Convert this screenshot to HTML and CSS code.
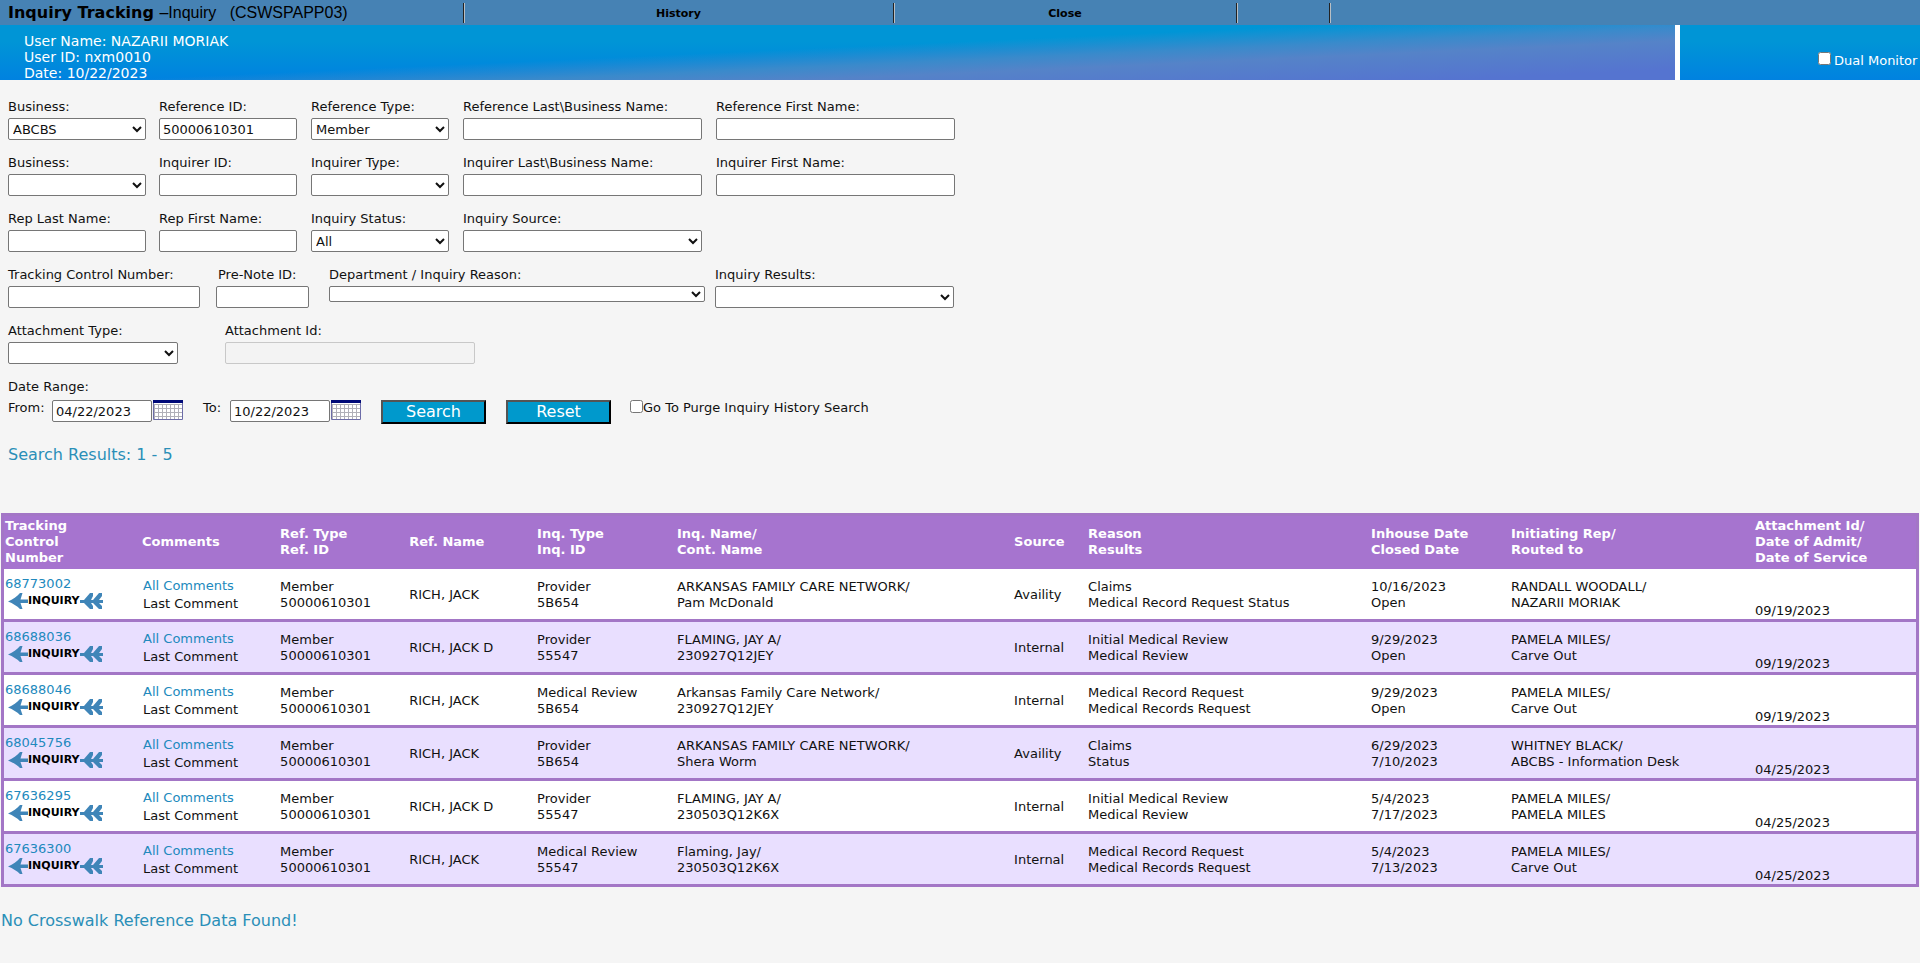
FILE: index.html
```html
<!DOCTYPE html>
<html lang="en">
<head>
<meta charset="utf-8">
<title>Inquiry Tracking</title>
<link rel="stylesheet" href="styles.css">
</head>
<body>
<svg class="defs" aria-hidden="true">
  <defs>
    <pattern id="grid" width="4" height="4" patternUnits="userSpaceOnUse" x="1" y="4">
      <path d="M0 .5H4M.5 0V4" stroke="#b0b0b8" stroke-width="1" fill="none"/>
    </pattern>
    <symbol id="calendar" viewBox="0 0 30 20">
      <path d="M0 0H30V20H0Z" fill="#fff"/>
      <path d="M1 4H29V19H1Z" fill="url(#grid)"/>
      <path d="M0 0H30V3H0Z" fill="#000a78"/>
      <path d="M.5 3V19.5H29.5V3" fill="none" stroke="#6c6ca8"/>
    </symbol>
    <symbol id="head" viewBox="0 0 20 16">
      <path d="M0 8.500C5 6.500 9 3.500 12 0H14.500L12.500 6.500H20V10H12.500L14.500 16H12C9 13 5 10.500 0 8.500Z" fill="#3f85b8"/>
    </symbol>
    <symbol id="fletch" viewBox="0 0 24 16">
      <path d="M0 7H4L10 0H13V3L11 7H13L19 0H22V3L19 7H23V10H19L22 13V16H19L13 10H11L13 13V16H10L4 10H0Z" fill="#3f85b8"/>
    </symbol>
  </defs>
</svg>

<header class="topbar">
  <h1 class="brand">Inquiry Tracking <span class="app">–Inquiry &nbsp; (CSWSPAPP03)</span></h1>
  <a class="menu" href="#history">History</a>
  <a class="menu" href="#close">Close</a>
  <span class="menu"></span>
  <span class="menu"></span>
</header>

<div class="banner">
  <div class="user">
    <div>User Name: NAZARII MORIAK</div>
    <div>User ID: nxm0010</div>
    <div>Date: 10/22/2023</div>
  </div>
  <div class="monitor">
    <input class="check" type="checkbox" id="dual"><label for="dual">Dual Monitor</label>
  </div>
</div>

<main>
<form class="search">
  <div class="row five">
    <div class="field"><label for="b1">Business:</label><select id="b1" class="ctl short"><option>ABCBS</option></select></div>
    <div class="field"><label for="refid">Reference ID:</label><input id="refid" class="ctl short" type="text" value="50000610301"></div>
    <div class="field"><label for="reft">Reference Type:</label><select id="reft" class="ctl short"><option>Member</option></select></div>
    <div class="field"><label for="refl">Reference Last\Business Name:</label><input id="refl" class="ctl long" type="text"></div>
    <div class="field"><label for="reff">Reference First Name:</label><input id="reff" class="ctl long" type="text"></div>
  </div>
  <div class="row five">
    <div class="field"><label for="b2">Business:</label><select id="b2" class="ctl short"><option></option></select></div>
    <div class="field"><label for="inqid">Inquirer ID:</label><input id="inqid" class="ctl short" type="text"></div>
    <div class="field"><label for="inqt">Inquirer Type:</label><select id="inqt" class="ctl short"><option></option></select></div>
    <div class="field"><label for="inql">Inquirer Last\Business Name:</label><input id="inql" class="ctl long" type="text"></div>
    <div class="field"><label for="inqf">Inquirer First Name:</label><input id="inqf" class="ctl long" type="text"></div>
  </div>
  <div class="row five">
    <div class="field"><label for="repl">Rep Last Name:</label><input id="repl" class="ctl short" type="text"></div>
    <div class="field"><label for="repf">Rep First Name:</label><input id="repf" class="ctl short" type="text"></div>
    <div class="field"><label for="stat">Inquiry Status:</label><select id="stat" class="ctl short"><option>All</option></select></div>
    <div class="field"><label for="src">Inquiry Source:</label><select id="src" class="ctl long"><option></option></select></div>
  </div>
  <div class="row four">
    <div class="field"><label for="tcn">Tracking Control Number:</label><input id="tcn" class="ctl tcn" type="text"></div>
    <div class="field"><label class="inset" for="pre">Pre-Note ID:</label><input id="pre" class="ctl pre" type="text"></div>
    <div class="field"><label for="dept">Department / Inquiry Reason:</label><select id="dept" class="ctl dept"><option></option></select></div>
    <div class="field"><label for="res">Inquiry Results:</label><select id="res" class="ctl long"><option></option></select></div>
  </div>
  <div class="row two">
    <div class="field"><label for="att">Attachment Type:</label><select id="att" class="ctl att"><option></option></select></div>
    <div class="field"><label for="attid">Attachment Id:</label><input id="attid" class="ctl attid" type="text" disabled></div>
  </div>
  <div class="dates-title">Date Range:</div>
  <div class="dates">
    <div class="date from"><label for="from">From:</label><input id="from" class="ctl day" type="text" value="04/22/2023"><button class="cal" type="button" aria-label="Pick from date"><svg><use href="#calendar"/></svg></button></div>
    <div class="date to"><label for="to">To:</label><input id="to" class="ctl day" type="text" value="10/22/2023"><button class="cal" type="button" aria-label="Pick to date"><svg><use href="#calendar"/></svg></button></div>
    <div class="actions"><button class="btn" type="button">Search</button><button class="btn" type="button">Reset</button></div>
    <div class="purge"><input class="check" type="checkbox" id="purge"><label for="purge">Go To Purge Inquiry History Search</label></div>
  </div>
</form>

<h2 class="results-title">Search Results: 1 - 5</h2>

<table class="results">
  <colgroup><col class="c-track"><col class="c-com"><col class="c-ref"><col class="c-name"><col class="c-inq"><col class="c-cont"><col class="c-src"><col class="c-reason"><col class="c-date"><col class="c-rep"><col></colgroup>
  <thead>
    <tr><th>Tracking<br>Control<br>Number</th><th>Comments</th><th>Ref. Type<br>Ref. ID</th><th>Ref. Name</th><th>Inq. Type<br>Inq. ID</th><th>Inq. Name/<br>Cont. Name</th><th>Source</th><th>Reason<br>Results</th><th>Inhouse Date<br>Closed Date</th><th>Initiating Rep/<br>Routed to</th><th>Attachment Id/<br>Date of Admit/<br>Date of Service</th></tr>
  </thead>
  <tbody>
    <tr>
      <td class="track"><a href="#68773002">68773002</a><a class="tag" href="#i1"><svg class="head"><use href="#head"/></svg>INQUIRY<svg class="fletch"><use href="#fletch"/></svg></a></td>
      <td class="com"><a href="#c1">All Comments</a><br>Last Comment</td>
      <td>Member<br>50000610301</td><td>RICH, JACK</td><td>Provider<br>5B654</td><td>ARKANSAS FAMILY CARE NETWORK/<br>Pam McDonald</td><td>Availity</td><td>Claims<br>Medical Record Request Status</td><td>10/16/2023<br>Open</td><td>RANDALL WOODALL/<br>NAZARII MORIAK</td><td class="svc">09/19/2023</td>
    </tr>
    <tr>
      <td class="track"><a href="#68688036">68688036</a><a class="tag" href="#i2"><svg class="head"><use href="#head"/></svg>INQUIRY<svg class="fletch"><use href="#fletch"/></svg></a></td>
      <td class="com"><a href="#c2">All Comments</a><br>Last Comment</td>
      <td>Member<br>50000610301</td><td>RICH, JACK D</td><td>Provider<br>55547</td><td>FLAMING, JAY A/<br>230927Q12JEY</td><td>Internal</td><td>Initial Medical Review<br>Medical Review</td><td>9/29/2023<br>Open</td><td>PAMELA MILES/<br>Carve Out</td><td class="svc">09/19/2023</td>
    </tr>
    <tr>
      <td class="track"><a href="#68688046">68688046</a><a class="tag" href="#i3"><svg class="head"><use href="#head"/></svg>INQUIRY<svg class="fletch"><use href="#fletch"/></svg></a></td>
      <td class="com"><a href="#c3">All Comments</a><br>Last Comment</td>
      <td>Member<br>50000610301</td><td>RICH, JACK</td><td>Medical Review<br>5B654</td><td>Arkansas Family Care Network/<br>230927Q12JEY</td><td>Internal</td><td>Medical Record Request<br>Medical Records Request</td><td>9/29/2023<br>Open</td><td>PAMELA MILES/<br>Carve Out</td><td class="svc">09/19/2023</td>
    </tr>
    <tr>
      <td class="track"><a href="#68045756">68045756</a><a class="tag" href="#i4"><svg class="head"><use href="#head"/></svg>INQUIRY<svg class="fletch"><use href="#fletch"/></svg></a></td>
      <td class="com"><a href="#c4">All Comments</a><br>Last Comment</td>
      <td>Member<br>50000610301</td><td>RICH, JACK</td><td>Provider<br>5B654</td><td>ARKANSAS FAMILY CARE NETWORK/<br>Shera Worm</td><td>Availity</td><td>Claims<br>Status</td><td>6/29/2023<br>7/10/2023</td><td>WHITNEY BLACK/<br>ABCBS - Information Desk</td><td class="svc">04/25/2023</td>
    </tr>
    <tr>
      <td class="track"><a href="#67636295">67636295</a><a class="tag" href="#i5"><svg class="head"><use href="#head"/></svg>INQUIRY<svg class="fletch"><use href="#fletch"/></svg></a></td>
      <td class="com"><a href="#c5">All Comments</a><br>Last Comment</td>
      <td>Member<br>50000610301</td><td>RICH, JACK D</td><td>Provider<br>55547</td><td>FLAMING, JAY A/<br>230503Q12K6X</td><td>Internal</td><td>Initial Medical Review<br>Medical Review</td><td>5/4/2023<br>7/17/2023</td><td>PAMELA MILES/<br>PAMELA MILES</td><td class="svc">04/25/2023</td>
    </tr>
    <tr>
      <td class="track"><a href="#67636300">67636300</a><a class="tag" href="#i6"><svg class="head"><use href="#head"/></svg>INQUIRY<svg class="fletch"><use href="#fletch"/></svg></a></td>
      <td class="com"><a href="#c6">All Comments</a><br>Last Comment</td>
      <td>Member<br>50000610301</td><td>RICH, JACK</td><td>Medical Review<br>55547</td><td>Flaming, Jay/<br>230503Q12K6X</td><td>Internal</td><td>Medical Record Request<br>Medical Records Request</td><td>5/4/2023<br>7/13/2023</td><td>PAMELA MILES/<br>Carve Out</td><td class="svc">04/25/2023</td>
    </tr>
  </tbody>
</table>

<p class="crosswalk">No Crosswalk Reference Data Found!</p>
</main>
</body>
</html>
```

FILE: styles.css
```css
* { box-sizing: border-box; }

body {
  margin: 0;
  background: #f5f5f5;
  color: #111;
  font: 13px/16px Verdana, "DejaVu Sans", sans-serif;
}

.defs { display: block; width: 0; height: 0; }

a { color: #2189bd; text-decoration: none; }

/* top menu bar */
.topbar {
  display: grid;
  grid-template-columns: 463fr 430fr 343fr 93fr 591fr;
  align-items: center;
  height: 25px;
  background: #4682b4;
}

.brand {
  margin: 0;
  padding-left: 8px;
  color: #000;
  font-size: 16px;
  line-height: 22px;
  white-space: nowrap;
}

.app { font-family: "Liberation Sans", Arial, sans-serif; font-weight: 400; }

.menu {
  height: 20px;
  border-left: 1px solid #222;
  box-shadow: inset 1px 0 #b9bfc4;
  color: #000;
  font-size: 11px;
  font-weight: 700;
  line-height: 21px;
  text-align: center;
}

/* user banner */
.banner {
  display: flex;
  gap: 5px;
  height: 55px;
  overflow: hidden;
  background: #fff;
  color: #fff;
}

.user {
  flex: 1;
  padding: 8px 24px 0;
  background:
    linear-gradient(177.4deg, transparent 46%, #3a8acb 60%, #5583c8 70%, #5574d0 92%),
    linear-gradient(#0095d6 30%, #0082e0);
  font-size: 14px;
}

.monitor {
  display: flex;
  flex: 0 0 240px;
  align-items: flex-start;
  gap: 3px;
  padding: 27px 0 0 138px;
  background: linear-gradient(#0095d6 30%, #0082e0);
  white-space: nowrap;
}

.monitor label { padding-top: 1px; }

.check { flex: none; width: 13px; height: 13px; margin: 0; }

/* search form */
.search {
  display: flex;
  flex-direction: column;
  padding: 19px 8px 0;
}

.row { display: grid; margin-bottom: 15px; }
.five { grid-template-columns: 151px 152px 152px 253px 240px; }
.four { grid-template-columns: 208px 113px 386px 240px; }
.two { grid-template-columns: 217px 250px; }

.field { display: flex; flex-direction: column; align-items: flex-start; gap: 3px; }
.inset { padding-left: 2px; }

.ctl {
  height: 22px;
  margin: 0;
  padding: 1px 3px;
  border: 1px solid #767676;
  border-radius: 2px;
  background-color: #fff;
  color: #111;
  font: inherit;
}

select.ctl { padding: 0; }
.ctl:disabled { border-color: #c8c8c8; background-color: #f3f3f3; }

.short { width: 138px; }
.long { width: 239px; }
.tcn { width: 192px; }
.pre { width: 93px; }
.dept { width: 376px; height: 16px; }
.att { width: 170px; }
.attid { width: 250px; }
.day { width: 100px; }

.dates-title { margin-bottom: 5px; }
.dates { display: flex; align-items: flex-start; }
.date { display: flex; align-items: flex-start; margin-right: 20px; }
.from label { width: 44px; }
.to label { width: 27px; }

.cal { width: 30px; height: 20px; margin-left: 1px; padding: 0; border: 0; background: none; }
.cal svg { display: block; width: 30px; height: 20px; }

.actions { display: flex; gap: 20px; }

.btn {
  width: 105px;
  height: 24px;
  padding: 0;
  border: 2px outset #000;
  background: #0099cc;
  color: #fff;
  font: 16px/20px Verdana, "DejaVu Sans", sans-serif;
}

.purge { display: flex; margin-left: 19px; }

.results-title, .crosswalk {
  margin: 0;
  color: #2a8fb8;
  font-size: 16px;
  font-weight: 400;
  line-height: 20px;
}

.results-title { padding: 21px 8px 48px; }
.crosswalk { padding: 24px 1px; }

/* results table */
.results {
  width: calc(100% - 2px);
  margin: 0 1px;
  border: 3px solid #a376c6;
  border-spacing: 0;
  table-layout: fixed;
}

.c-track { width: 7.17%; }
.c-com { width: 7.22%; }
.c-ref { width: 6.75%; }
.c-name { width: 6.69%; }
.c-inq { width: 7.32%; }
.c-cont { width: 17.63%; }
.c-src { width: 3.87%; }
.c-reason { width: 14.8%; }
.c-date { width: 7.32%; }
.c-rep { width: 12.76%; }

.results th {
  height: 53px;
  padding: 0 1px 2px;
  background: #a674cf;
  color: #fff;
  text-align: left;
}

.results td {
  height: 53px;
  padding: 2px 1px 0;
  border-bottom: 3px solid #a376c6;
  background: #fff;
}

.results tr:nth-child(even) td { background: #e9dfff; }
.results tr:last-child td { height: 50px; border-bottom: 0; }

.results .com { padding-left: 2px; line-height: 18px; }
.results .track { padding: 0 1px 3px; }
.results .svc { vertical-align: bottom; }

.tag {
  display: flex;
  align-items: center;
  margin-top: 1px;
  padding-left: 3px;
  color: #000;
  font-size: 11px;
  font-weight: 700;
}

.head { width: 20px; height: 16px; }
.fletch { width: 24px; height: 16px; }
```
